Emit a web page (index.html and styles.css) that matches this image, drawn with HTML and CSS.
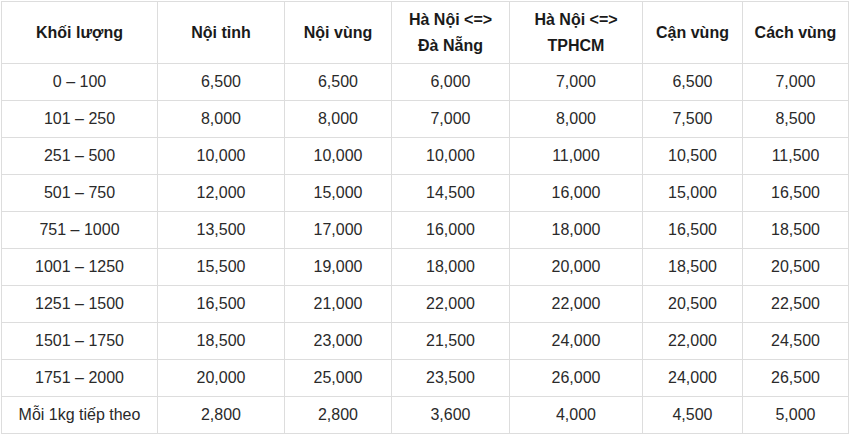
FILE: index.html
```html
<!DOCTYPE html>
<html lang="vi">
<head>
<meta charset="utf-8">
<link rel="stylesheet" href="styles.css">
</head>
<body>
<table class="rates">
  <colgroup>
    <col class="c1"><col class="c2"><col class="c3"><col class="c4"><col class="c5"><col class="c6"><col class="c7">
  </colgroup>
  <thead>
    <tr>
      <th>Khối lượng</th>
      <th>Nội tỉnh</th>
      <th>Nội vùng</th>
      <th>Hà Nội &lt;=&gt;<br>Đà Nẵng</th>
      <th>Hà Nội &lt;=&gt;<br>TPHCM</th>
      <th>Cận vùng</th>
      <th>Cách vùng</th>
    </tr>
  </thead>
  <tbody>
    <tr><td>0 – 100</td><td>6,500</td><td>6,500</td><td>6,000</td><td>7,000</td><td>6,500</td><td>7,000</td></tr>
    <tr><td>101 – 250</td><td>8,000</td><td>8,000</td><td>7,000</td><td>8,000</td><td>7,500</td><td>8,500</td></tr>
    <tr><td>251 – 500</td><td>10,000</td><td>10,000</td><td>10,000</td><td>11,000</td><td>10,500</td><td>11,500</td></tr>
    <tr><td>501 – 750</td><td>12,000</td><td>15,000</td><td>14,500</td><td>16,000</td><td>15,000</td><td>16,500</td></tr>
    <tr><td>751 – 1000</td><td>13,500</td><td>17,000</td><td>16,000</td><td>18,000</td><td>16,500</td><td>18,500</td></tr>
    <tr><td>1001 – 1250</td><td>15,500</td><td>19,000</td><td>18,000</td><td>20,000</td><td>18,500</td><td>20,500</td></tr>
    <tr><td>1251 – 1500</td><td>16,500</td><td>21,000</td><td>22,000</td><td>22,000</td><td>20,500</td><td>22,500</td></tr>
    <tr><td>1501 – 1750</td><td>18,500</td><td>23,000</td><td>21,500</td><td>24,000</td><td>22,000</td><td>24,500</td></tr>
    <tr><td>1751 – 2000</td><td>20,000</td><td>25,000</td><td>23,500</td><td>26,000</td><td>24,000</td><td>26,500</td></tr>
    <tr><td>Mỗi 1kg tiếp theo</td><td>2,800</td><td>2,800</td><td>3,600</td><td>4,000</td><td>4,500</td><td>5,000</td></tr>
  </tbody>
</table>
</body>
</html>
```
FILE: styles.css
```css
html, body {
  margin: 0;
  padding: 0;
  background: #fff;
}
body {
  padding: 1px 0 0 1px;
  font-family: "Liberation Sans", Arial, sans-serif;
  font-size: 16px;
  color: #222;
}
.rates {
  border-collapse: collapse;
  table-layout: fixed;
  width: 847px;
}
.c1 { width: 156px; }
.c2 { width: 127px; }
.c3 { width: 107px; }
.c4 { width: 118px; }
.c5 { width: 133px; }
.c6 { width: 100px; }
.c7 { width: 106px; }
.rates th, .rates td {
  border: 1px solid #dddddd;
  text-align: center;
  vertical-align: middle;
  padding: 0 4px;
}
.rates th {
  height: 61px;
  font-weight: bold;
  line-height: 26px;
  color: #1a1a1a;
}
.rates td {
  height: 36px;
  line-height: 20px;
  color: #2a2a2a;
}
```
